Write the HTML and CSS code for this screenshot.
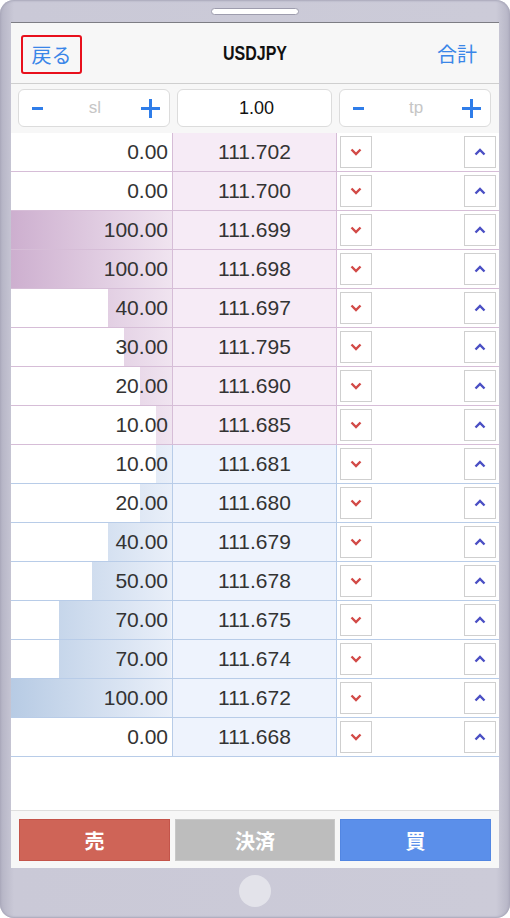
FILE: index.html
```html
<!DOCTYPE html>
<html lang="ja">

<head>
    <meta charset="UTF-8">
    <meta name="viewport" content="width=device-width, initial-scale=1.0">
    <title>USDJPY</title>
    <link rel="stylesheet" href="styles.css">
</head>

<body>
    <div class="phone">
        <div class="phone-top"><span class="speaker"></span></div>

        <div class="screen">
            <!-- Header -->
            <div class="header">
                <a class="back">戻る</a>
                <div class="title"><span>USDJPY</span></div>
                <a class="total">合計</a>
            </div>

            <!-- sl / lot / tp -->
            <div class="inputs">
                <div class="field">
                    <span class="minus"></span>
                    <span class="hint">sl</span>
                    <span class="plus"></span>
                </div>
                <div class="field lot">1.00</div>
                <div class="field">
                    <span class="minus"></span>
                    <span class="hint">tp</span>
                    <span class="plus"></span>
                </div>
            </div>

            <!-- Order book -->
            <div class="book">
                <div class="row ask">
                    <div class="qty"><span class="bar" style="width:0%"></span><span class="num">0.00</span></div>
                    <div class="price">111.702</div>
                    <div class="act"><button class="arrow down"><svg viewBox="0 0 12 8"><path d="M1.5 1.5 6 6l4.5-4.5"/></svg></button><button class="arrow up"><svg viewBox="0 0 12 8"><path d="M1.5 6.5 6 2l4.5 4.5"/></svg></button></div>
                </div>
                <div class="row ask">
                    <div class="qty"><span class="bar" style="width:0%"></span><span class="num">0.00</span></div>
                    <div class="price">111.700</div>
                    <div class="act"><button class="arrow down"><svg viewBox="0 0 12 8"><path d="M1.5 1.5 6 6l4.5-4.5"/></svg></button><button class="arrow up"><svg viewBox="0 0 12 8"><path d="M1.5 6.5 6 2l4.5 4.5"/></svg></button></div>
                </div>
                <div class="row ask">
                    <div class="qty"><span class="bar" style="width:100%"></span><span class="num">100.00</span></div>
                    <div class="price">111.699</div>
                    <div class="act"><button class="arrow down"><svg viewBox="0 0 12 8"><path d="M1.5 1.5 6 6l4.5-4.5"/></svg></button><button class="arrow up"><svg viewBox="0 0 12 8"><path d="M1.5 6.5 6 2l4.5 4.5"/></svg></button></div>
                </div>
                <div class="row ask">
                    <div class="qty"><span class="bar" style="width:100%"></span><span class="num">100.00</span></div>
                    <div class="price">111.698</div>
                    <div class="act"><button class="arrow down"><svg viewBox="0 0 12 8"><path d="M1.5 1.5 6 6l4.5-4.5"/></svg></button><button class="arrow up"><svg viewBox="0 0 12 8"><path d="M1.5 6.5 6 2l4.5 4.5"/></svg></button></div>
                </div>
                <div class="row ask">
                    <div class="qty"><span class="bar" style="width:40%"></span><span class="num">40.00</span></div>
                    <div class="price">111.697</div>
                    <div class="act"><button class="arrow down"><svg viewBox="0 0 12 8"><path d="M1.5 1.5 6 6l4.5-4.5"/></svg></button><button class="arrow up"><svg viewBox="0 0 12 8"><path d="M1.5 6.5 6 2l4.5 4.5"/></svg></button></div>
                </div>
                <div class="row ask">
                    <div class="qty"><span class="bar" style="width:30%"></span><span class="num">30.00</span></div>
                    <div class="price">111.795</div>
                    <div class="act"><button class="arrow down"><svg viewBox="0 0 12 8"><path d="M1.5 1.5 6 6l4.5-4.5"/></svg></button><button class="arrow up"><svg viewBox="0 0 12 8"><path d="M1.5 6.5 6 2l4.5 4.5"/></svg></button></div>
                </div>
                <div class="row ask">
                    <div class="qty"><span class="bar" style="width:20%"></span><span class="num">20.00</span></div>
                    <div class="price">111.690</div>
                    <div class="act"><button class="arrow down"><svg viewBox="0 0 12 8"><path d="M1.5 1.5 6 6l4.5-4.5"/></svg></button><button class="arrow up"><svg viewBox="0 0 12 8"><path d="M1.5 6.5 6 2l4.5 4.5"/></svg></button></div>
                </div>
                <div class="row ask">
                    <div class="qty"><span class="bar" style="width:10%"></span><span class="num">10.00</span></div>
                    <div class="price">111.685</div>
                    <div class="act"><button class="arrow down"><svg viewBox="0 0 12 8"><path d="M1.5 1.5 6 6l4.5-4.5"/></svg></button><button class="arrow up"><svg viewBox="0 0 12 8"><path d="M1.5 6.5 6 2l4.5 4.5"/></svg></button></div>
                </div>

                <div class="row bid">
                    <div class="qty"><span class="bar" style="width:10%"></span><span class="num">10.00</span></div>
                    <div class="price">111.681</div>
                    <div class="act"><button class="arrow down"><svg viewBox="0 0 12 8"><path d="M1.5 1.5 6 6l4.5-4.5"/></svg></button><button class="arrow up"><svg viewBox="0 0 12 8"><path d="M1.5 6.5 6 2l4.5 4.5"/></svg></button></div>
                </div>
                <div class="row bid">
                    <div class="qty"><span class="bar" style="width:20%"></span><span class="num">20.00</span></div>
                    <div class="price">111.680</div>
                    <div class="act"><button class="arrow down"><svg viewBox="0 0 12 8"><path d="M1.5 1.5 6 6l4.5-4.5"/></svg></button><button class="arrow up"><svg viewBox="0 0 12 8"><path d="M1.5 6.5 6 2l4.5 4.5"/></svg></button></div>
                </div>
                <div class="row bid">
                    <div class="qty"><span class="bar" style="width:40%"></span><span class="num">40.00</span></div>
                    <div class="price">111.679</div>
                    <div class="act"><button class="arrow down"><svg viewBox="0 0 12 8"><path d="M1.5 1.5 6 6l4.5-4.5"/></svg></button><button class="arrow up"><svg viewBox="0 0 12 8"><path d="M1.5 6.5 6 2l4.5 4.5"/></svg></button></div>
                </div>
                <div class="row bid">
                    <div class="qty"><span class="bar" style="width:50%"></span><span class="num">50.00</span></div>
                    <div class="price">111.678</div>
                    <div class="act"><button class="arrow down"><svg viewBox="0 0 12 8"><path d="M1.5 1.5 6 6l4.5-4.5"/></svg></button><button class="arrow up"><svg viewBox="0 0 12 8"><path d="M1.5 6.5 6 2l4.5 4.5"/></svg></button></div>
                </div>
                <div class="row bid">
                    <div class="qty"><span class="bar" style="width:70%"></span><span class="num">70.00</span></div>
                    <div class="price">111.675</div>
                    <div class="act"><button class="arrow down"><svg viewBox="0 0 12 8"><path d="M1.5 1.5 6 6l4.5-4.5"/></svg></button><button class="arrow up"><svg viewBox="0 0 12 8"><path d="M1.5 6.5 6 2l4.5 4.5"/></svg></button></div>
                </div>
                <div class="row bid">
                    <div class="qty"><span class="bar" style="width:70%"></span><span class="num">70.00</span></div>
                    <div class="price">111.674</div>
                    <div class="act"><button class="arrow down"><svg viewBox="0 0 12 8"><path d="M1.5 1.5 6 6l4.5-4.5"/></svg></button><button class="arrow up"><svg viewBox="0 0 12 8"><path d="M1.5 6.5 6 2l4.5 4.5"/></svg></button></div>
                </div>
                <div class="row bid">
                    <div class="qty"><span class="bar" style="width:100%"></span><span class="num">100.00</span></div>
                    <div class="price">111.672</div>
                    <div class="act"><button class="arrow down"><svg viewBox="0 0 12 8"><path d="M1.5 1.5 6 6l4.5-4.5"/></svg></button><button class="arrow up"><svg viewBox="0 0 12 8"><path d="M1.5 6.5 6 2l4.5 4.5"/></svg></button></div>
                </div>
                <div class="row bid">
                    <div class="qty"><span class="bar" style="width:0%"></span><span class="num">0.00</span></div>
                    <div class="price">111.668</div>
                    <div class="act"><button class="arrow down"><svg viewBox="0 0 12 8"><path d="M1.5 1.5 6 6l4.5-4.5"/></svg></button><button class="arrow up"><svg viewBox="0 0 12 8"><path d="M1.5 6.5 6 2l4.5 4.5"/></svg></button></div>
                </div>
            </div>

            <div class="spacer"></div>

            <!-- Order buttons -->
            <div class="footer">
                <button class="order sell">売</button>
                <button class="order close">決済</button>
                <button class="order buy">買</button>
            </div>
        </div>

        <div class="phone-bottom"><span class="home"></span></div>
    </div>
</body>

</html>
```

FILE: styles.css
```css
body {
    margin: 0;
    background-color: #fff;
    font-family: "Liberation Sans", Arial, "Noto Sans CJK JP", sans-serif;
}

.phone {
    width: 510px;
    height: 918px;
    box-sizing: border-box;
    padding: 0 11px;
    display: flex;
    flex-direction: column;
    border-radius: 14px;
    background: linear-gradient(to right, #b4b3c4 0px, #cac9d7 14px, #cccbd8 496px, #b4b3c4 510px);
    box-shadow: inset 0 0 2px 1px #a8a7b9;
}

.phone-top {
    height: 22px;
    display: flex;
    justify-content: center;
    padding-top: 8px;
    box-sizing: border-box;
}

.speaker {
    width: 86px;
    height: 5px;
    background-color: #fff;
    border: 1px solid #9e9dae;
    border-radius: 4px;
}

.screen {
    flex: 1;
    display: flex;
    flex-direction: column;
    background-color: #fff;
    border-top: 1px solid #7d7d84;
}

/* header */
.header {
    height: 60px;
    display: grid;
    grid-template-columns: 1fr auto 1fr;
    align-items: center;
    padding: 0 22px 0 10px;
    background-color: #f7f7f7;
    border-bottom: 1px solid #cfcfcf;
}

.back,
.total {
    font-size: 20px;
    color: #3a86e8;
    font-family: "Noto Sans CJK JP", sans-serif;
}

.back {
    justify-self: start;
    width: 57px;
    height: 35px;
    border: 2px solid #e8101c;
    border-radius: 3px;
    display: flex;
    align-items: center;
    justify-content: center;
    margin-top: 2px;
}

.total {
    justify-self: end;
}

.title {
    font-size: 20px;
    font-weight: bold;
    color: #111;
    margin-left: 12px;
}

.title span {
    display: inline-block;
    transform: scaleX(0.8);
}

/* inputs */
.inputs {
    height: 49px;
    box-sizing: border-box;
    padding: 5px 7px 6px;
    display: grid;
    grid-template-columns: 152px 155px 152px;
    gap: 7px;
    background-color: #f7f7f7;
}

.field {
    background-color: #fff;
    border: 1px solid #dcdcdc;
    border-radius: 6px;
    display: flex;
    align-items: center;
    justify-content: space-between;
    padding: 0 9px 0 13px;
}

.field.lot {
    justify-content: center;
    font-size: 18px;
    color: #111;
}

.hint {
    font-size: 17px;
    color: #c6c6c6;
    margin-left: 6px;
}

.minus {
    width: 11px;
    height: 3px;
    background-color: #2f7de9;
}

.plus {
    width: 19px;
    height: 19px;
    background:
        linear-gradient(#2f7de9, #2f7de9) center / 19px 3px no-repeat,
        linear-gradient(#2f7de9, #2f7de9) center / 3px 19px no-repeat;
}

/* order book */
.row {
    height: 39px;
    box-sizing: border-box;
    display: grid;
    grid-template-columns: 162px 164px 1fr;
    font-size: 21px;
    color: #333;
}

.row.ask {
    border-bottom: 1px solid #d6bdd7;
}

.row.bid {
    border-bottom: 1px solid #b8cce8;
}

.qty {
    position: relative;
    display: flex;
    align-items: center;
    justify-content: flex-end;
    padding-right: 4px;
}

.bar {
    position: absolute;
    top: 0;
    right: 0;
    bottom: 0;
    background-size: 161px 100%;
    background-position: right;
}

.ask .bar {
    background-image: linear-gradient(to right, #cdafcf, #f0e4f0);
}

.bid .bar {
    background-image: linear-gradient(to right, #b7cbe4, #e9eff9);
}

.num {
    position: relative;
}

.price {
    display: flex;
    align-items: center;
    justify-content: center;
}

.ask .qty,
.ask .price {
    border-right: 1px solid #d6bdd7;
}

.bid .qty,
.bid .price {
    border-right: 1px solid #b8cce8;
}

.ask .price {
    background-color: #f6ebf6;
}

.bid .price {
    background-color: #eef3fd;
}

.act {
    display: flex;
    align-items: center;
    justify-content: space-between;
    padding: 0 3px;
}

.arrow {
    width: 32px;
    height: 32px;
    padding: 0;
    border: 1px solid #cfcfcf;
    background-color: #fff;
    display: flex;
    align-items: center;
    justify-content: center;
}

.arrow svg {
    width: 12px;
    height: 8px;
    fill: none;
    stroke-width: 2.4;
}

.arrow.down svg {
    stroke: #d24a47;
}

.arrow.up svg {
    stroke: #4a4fc4;
}

.spacer {
    flex: 1;
}

/* footer */
.footer {
    height: 58px;
    box-sizing: border-box;
    padding: 8px 8px;
    display: grid;
    grid-template-columns: 151px 1fr 151px;
    gap: 5px;
    background-color: #f7f7f7;
    border-top: 1px solid #dedede;
}

.order {
    border: 1px solid transparent;
    color: #fff;
    font-size: 20px;
    font-weight: bold;
    font-family: "Noto Sans CJK JP", sans-serif;
    height: 42px;
}

.order.sell {
    background-color: #cf6457;
    border-color: #c4544a;
}

.order.close {
    background-color: #bdbdbd;
    border-color: #c8c8c8;
}

.order.buy {
    background-color: #5b8fea;
    border-color: #5286e2;
}

.phone-bottom {
    height: 50px;
    display: flex;
    justify-content: center;
    padding-top: 7px;
    box-sizing: border-box;
}

.home {
    width: 32px;
    height: 32px;
    border-radius: 50%;
    background-color: #e3e3ea;
}
```
